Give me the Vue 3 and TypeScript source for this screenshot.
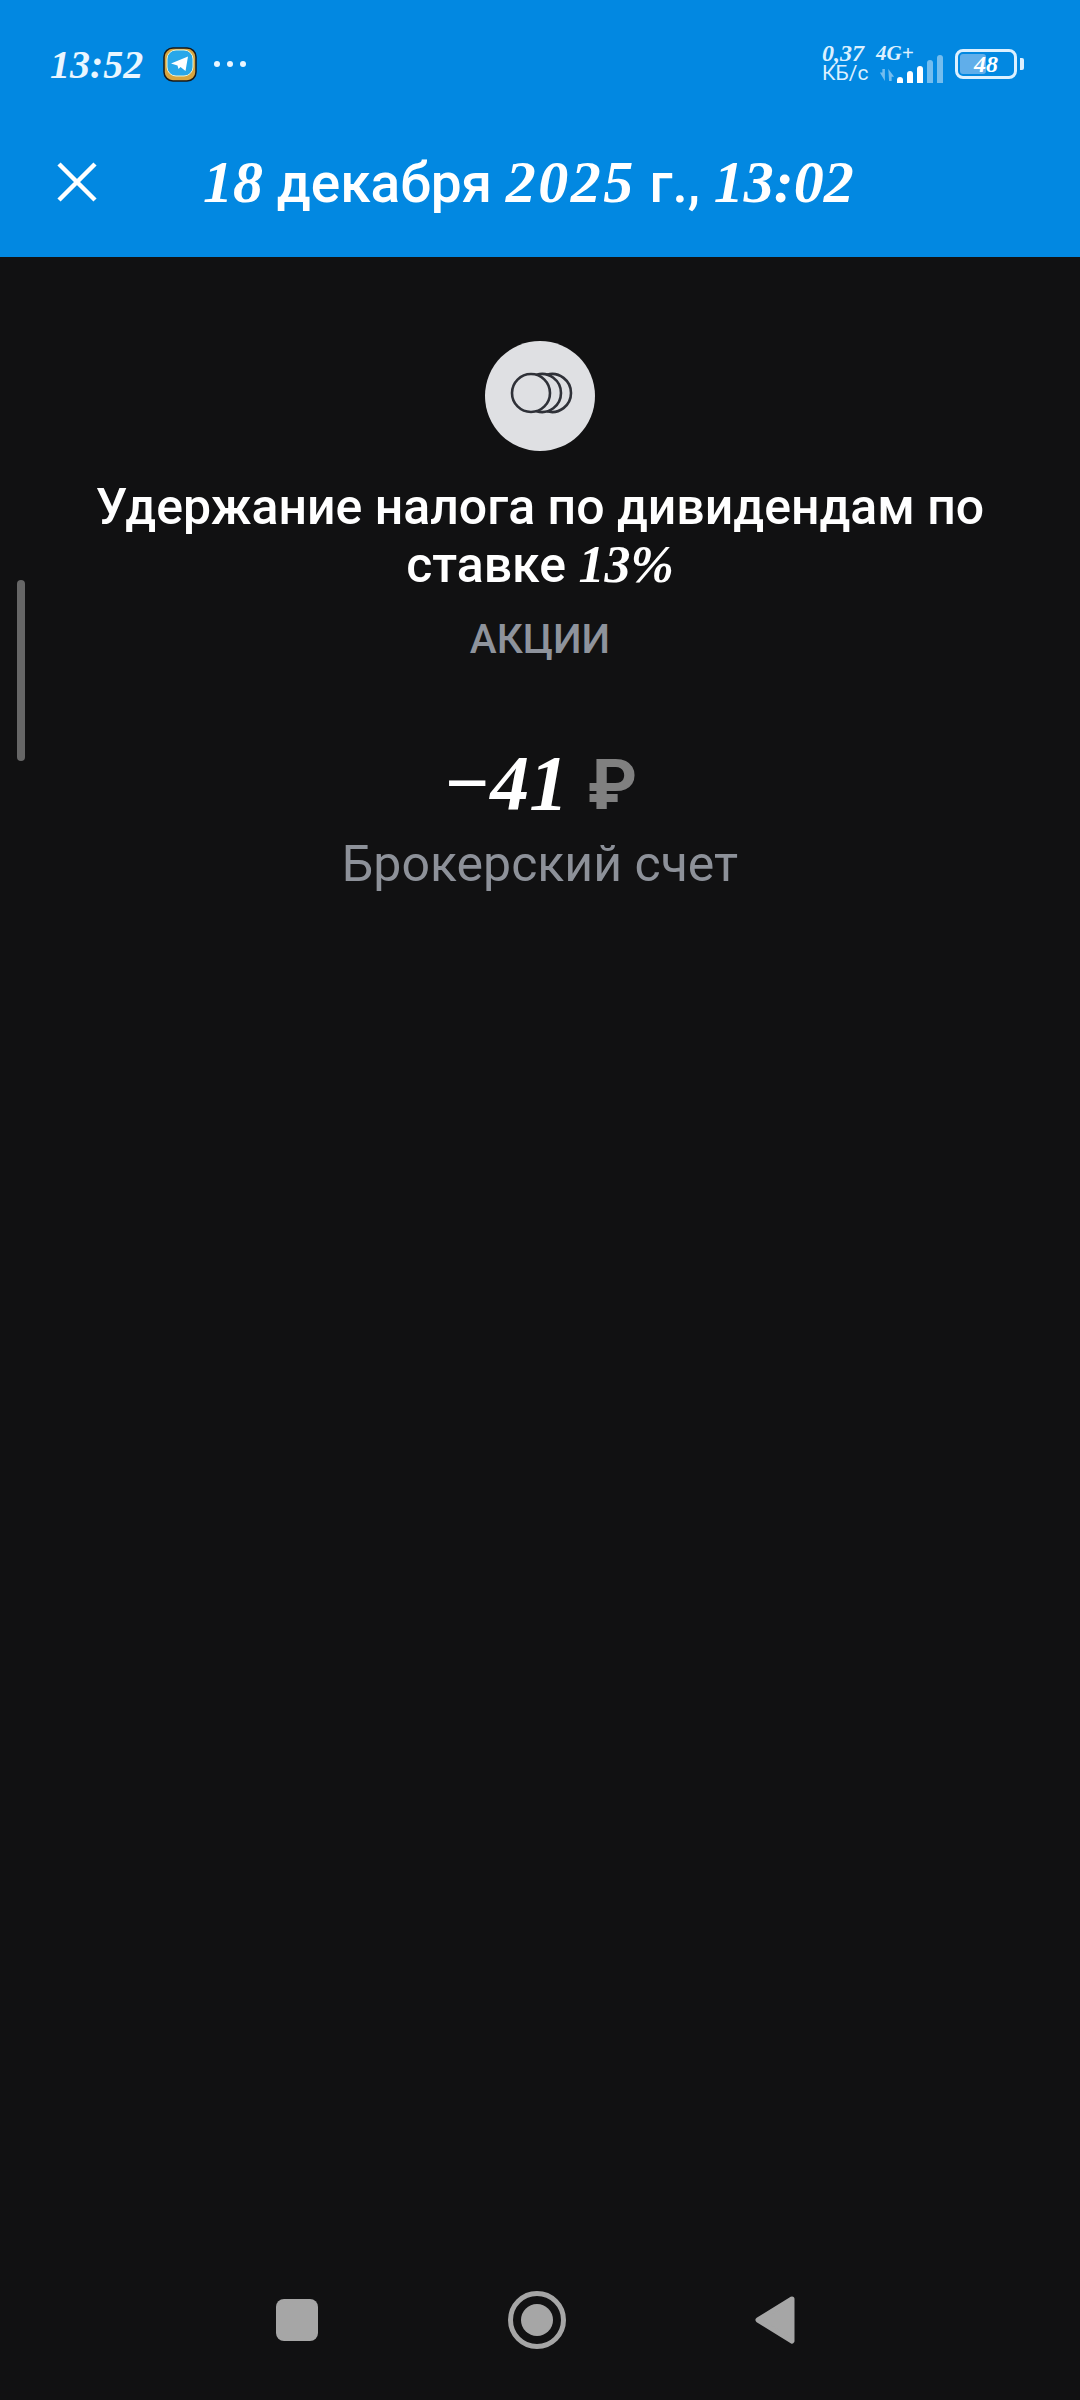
<script setup lang="ts">
const bars = [
  { h: 6, op: 1 },
  { h: 12, op: 1 },
  { h: 17, op: 1 },
  { h: 23, op: 0.45 },
  { h: 28, op: 0.45 },
];
</script>

<template>
  <div class="page">
    <header class="top">
      <div class="status">
        <div class="status-left">
          <span class="num clock">13:52</span>
          <svg class="tg" width="34" height="35" viewBox="0 0 34 35">
            <rect x="1" y="1" width="32" height="33" rx="9" fill="#d7a53f" stroke="#1a1a1a" stroke-width="1.5" />
            <rect x="4" y="3" width="26" height="26" rx="9" fill="#27a7ea" stroke="#e8f4d8" stroke-width="1" />
            <path d="M8 16.5 25 9.5 22.5 24 17.5 20 15.5 22 14.5 18.5Z" fill="#fff" />
          </svg>
          <span class="dots"><i></i><i></i><i></i></span>
        </div>
        <div class="status-right">
          <div class="speed">
            <span class="num speed-val">0,37</span>
            <span class="speed-unit">КБ/с</span>
          </div>
          <div class="net">
            <span class="num net-label">4G+</span>
            <div class="net-row">
              <svg width="16" height="16" viewBox="0 0 19 16" class="arrows">
                <path d="M1 5h3V1h3v14L1 5Z" fill="#fff" opacity="0.45" />
                <path d="M11 1l7 9h-3v5h-3Z" fill="#fff" opacity="0.45" />
              </svg>
              <div class="bars">
                <span v-for="(b, i) in bars" :key="i" class="bar" :style="{ height: b.h + 'px', opacity: b.op }"></span>
              </div>
            </div>
          </div>
          <div class="battery">
            <div class="battery-body">
              <span class="battery-fill"></span>
              <span class="num battery-val">48</span>
            </div>
            <span class="battery-nub"></span>
          </div>
        </div>
      </div>
      <div class="toolbar">
        <svg class="close" width="40" height="40" viewBox="0 0 40 40">
          <path d="M2 2 38 38M38 2 2 38" stroke="#fff" stroke-width="4.5" fill="none" />
        </svg>
        <h1 class="date"><span class="num">18</span> декабря <span class="num year">2025</span> г., <span class="num">13:02</span></h1>
      </div>
    </header>

    <main class="content">
      <span class="scroll-thumb"></span>
      <div class="avatar">
        <svg width="66" height="42" viewBox="0 0 66 42">
          <circle cx="24" cy="21" r="19" fill="none" stroke="#2f3138" stroke-width="2.6" />
          <path d="M29.5 2.81A19 19 0 1 1 29.5 39.19" fill="none" stroke="#2f3138" stroke-width="2.6" />
          <path d="M40 2.67A19 19 0 1 1 40 39.33" fill="none" stroke="#2f3138" stroke-width="2.6" />
        </svg>
      </div>
      <h2 class="title">Удержание налога по дивидендам по ставке <span class="num">13%</span></h2>
      <p class="category">АКЦИИ</p>
      <p class="amount"><span class="num">−41</span> <span class="currency">₽</span></p>
      <p class="account">Брокерский счет</p>
    </main>

    <nav class="nav">
      <span class="nav-square"></span>
      <span class="nav-home"><i></i></span>
      <svg width="40" height="48" viewBox="0 0 40 48">
        <path d="M37 3 3 24 37 45Z" fill="#a6a6a6" stroke="#a6a6a6" stroke-width="5" stroke-linejoin="round" />
      </svg>
    </nav>
  </div>
</template>

<style>
html,
body {
  margin: 0;
  background: #111112;
}
</style>

<style scoped>
.page {
  width: 1080px;
  height: 2400px;
  display: flex;
  flex-direction: column;
  background: #111112;
  font-family: Roboto, "Noto Sans", sans-serif;
  color: #fff;
}

.num {
  font-family: "Liberation Serif", serif;
  font-style: italic;
  font-weight: 700;
}

.top {
  height: 257px;
  background: #0288e1;
  display: flex;
  flex-direction: column;
  flex-shrink: 0;
}

.status {
  height: 128px;
  padding: 0 56px 0 50px;
  display: flex;
  justify-content: space-between;
  align-items: center;
}

.status-left {
  display: flex;
  align-items: center;
}

.clock {
  font-size: 40px;
  color: #eaf6ff;
}

.tg {
  margin-left: 20px;
}

.dots {
  display: flex;
  gap: 7px;
  margin-left: 17px;
}

.dots i {
  width: 6px;
  height: 6px;
  border-radius: 50%;
  background: #eaf6ff;
}

.status-right {
  display: flex;
  align-items: center;
  color: #dcf0ff;
}

.speed {
  display: flex;
  flex-direction: column;
  width: 54px;
  margin-top: -4px;
}

.speed-val {
  font-size: 24px;
  line-height: 22px;
}

.speed-unit {
  font-size: 21px;
  line-height: 18px;
  white-space: nowrap;
}

.net {
  display: flex;
  flex-direction: column;
  width: 68px;
}

.net-label {
  font-size: 21px;
  line-height: 16px;
}

.net-row {
  display: flex;
  align-items: flex-end;
  gap: 2px;
  margin-top: -8px;
  height: 30px;
}

.arrows {
  margin-left: 3px;
}

.bars {
  display: flex;
  align-items: flex-end;
  gap: 4px;
}

.bar {
  width: 6px;
  background: #fff;
  border-radius: 3px 3px 0 0;
}

.battery {
  display: flex;
  align-items: center;
  gap: 3px;
  margin-left: 11px;
}

.battery-body {
  position: relative;
  width: 62px;
  height: 30px;
  box-sizing: border-box;
  border: 3px solid #dcf0ff;
  border-radius: 8px;
  display: flex;
  align-items: center;
  justify-content: center;
}

.battery-fill {
  position: absolute;
  left: 2px;
  top: 2px;
  bottom: 2px;
  width: 26px;
  background: #60aeea;
  border-radius: 3px;
}

.battery-val {
  position: relative;
  font-size: 24px;
  line-height: 24px;
  color: #fff;
}

.battery-nub {
  width: 4px;
  height: 12px;
  background: #dcf0ff;
  border-radius: 0 2px 2px 0;
}

.toolbar {
  flex: 1;
  display: flex;
  align-items: flex-start;
  padding: 34px 0 0 57px;
}

.close {
  flex-shrink: 0;
}

.date {
  margin: -17px 0 0 106px;
  font-size: 55px;
  line-height: 74px;
  font-weight: 500;
  white-space: nowrap;
  color: #fff;
}

.date .num {
  font-size: 60px;
}

.date .year {
  letter-spacing: 2.5px;
}

.content {
  position: relative;
  flex: 1;
  display: flex;
  flex-direction: column;
  align-items: center;
  padding: 84px 48px 0;
  text-align: center;
}

.scroll-thumb {
  position: absolute;
  left: 17px;
  top: 323px;
  width: 8px;
  height: 181px;
  border-radius: 4px;
  background: #666;
}

.avatar {
  width: 110px;
  height: 110px;
  border-radius: 50%;
  background: #dfe0e3;
  display: flex;
  align-items: center;
  justify-content: center;
}

.avatar svg {
  margin-top: -6px;
}

.title {
  margin: 28px 0 0;
  font-size: 50px;
  line-height: 57px;
  font-weight: 500;
}

.title .num {
  font-size: 52px;
}

.category {
  margin: 23px 0 0;
  font-size: 40.5px;
  line-height: 44px;
  font-weight: 500;
  color: #8e939c;
}

.amount {
  margin: 73px 0 0;
  font-size: 78px;
  line-height: 97px;
  font-weight: 700;
  white-space: nowrap;
}

.currency {
  color: #808080;
  font-size: 70px;
}

.account {
  margin: 0;
  font-size: 50px;
  line-height: 60px;
  color: #8d9199;
}

.nav {
  height: 160px;
  flex-shrink: 0;
  display: flex;
  justify-content: space-between;
  align-items: center;
  padding: 0 285px 0 276px;
  box-sizing: border-box;
}

.nav-square {
  width: 42px;
  height: 42px;
  border-radius: 8px;
  background: #a6a6a6;
}

.nav-home {
  width: 58px;
  height: 58px;
  box-sizing: border-box;
  border: 5px solid #a6a6a6;
  border-radius: 50%;
  display: flex;
  align-items: center;
  justify-content: center;
}

.nav-home i {
  width: 32px;
  height: 32px;
  border-radius: 50%;
  background: #a6a6a6;
}
</style>
